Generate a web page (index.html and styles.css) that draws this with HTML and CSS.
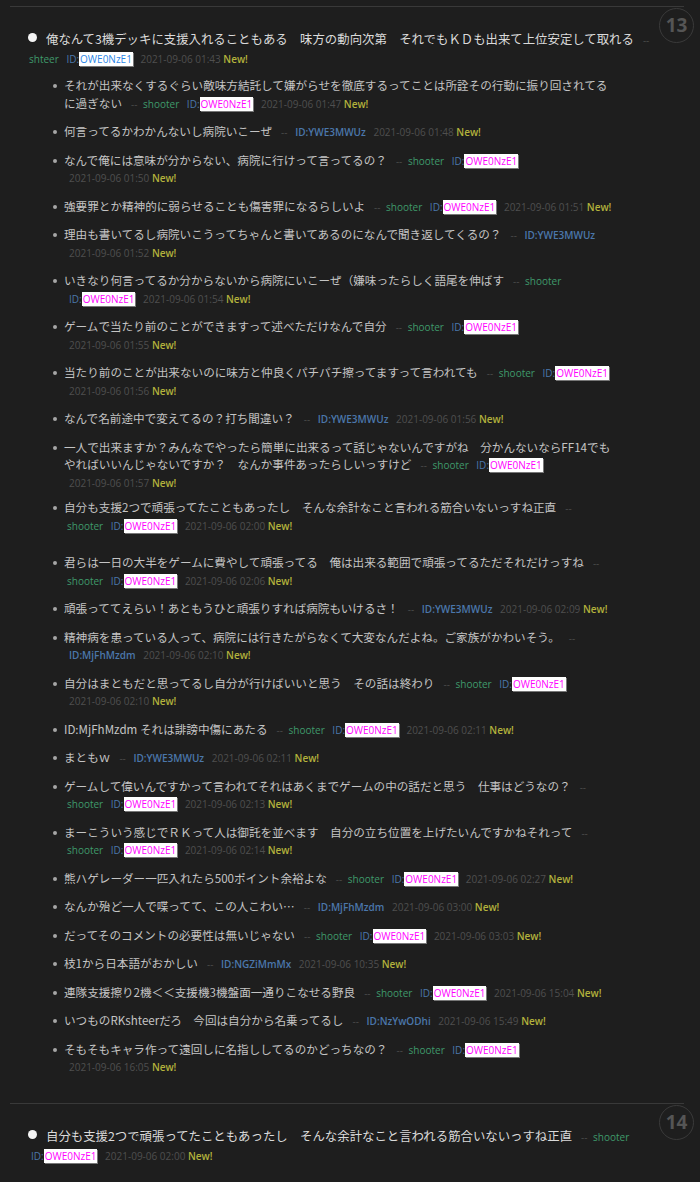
FILE: index.html
```html
<!DOCTYPE html>
<html lang="ja">
<head>
  <meta charset="UTF-8" />
  <meta name="viewport" content="width=device-width, initial-scale=1.0"/>
  <title>Thread</title>
  <link rel="stylesheet" href="styles.css">
</head>
<body>
  <div class="thread">
    <div class="num">13</div>
    <div class="head">
      <span class="dot"></span>俺なんて3機デッキに支援入れることもある　味方の動向次第　それでもＫＤも出来て上位安定して取れる<span class="meta">-- <span class="name">shteer</span> <span class="id">ID:<b class="box op">OWE0NzE1</b></span> <span class="date">2021-09-06 01:43 <i class="new">New!</i></span></span>
    </div>
    <ul class="replies">
      <li>それが出来なくするぐらい敵味方結託して嫌がらせを徹底するってことは所詮その行動に振り回されてるに過ぎない<span class="meta">-- <span class="name">shooter</span> <span class="id">ID:<b class="box">OWE0NzE1</b></span> <span class="date">2021-09-06 01:47 <i class="new">New!</i></span></span></li>
      <li>何言ってるかわかんないし病院いこーぜ<span class="meta">-- <span class="id uid">ID:YWE3MWUz</span> <span class="date">2021-09-06 01:48 <i class="new">New!</i></span></span></li>
      <li>なんで俺には意味が分からない、病院に行けって言ってるの？<span class="meta">-- <span class="name">shooter</span> <span class="id">ID:<b class="box">OWE0NzE1</b></span> <span class="date">2021-09-06 01:50 <i class="new">New!</i></span></span></li>
      <li>強要罪とか精神的に弱らせることも傷害罪になるらしいよ<span class="meta">-- <span class="name">shooter</span> <span class="id">ID:<b class="box">OWE0NzE1</b></span> <span class="date">2021-09-06 01:51 <i class="new">New!</i></span></span></li>
      <li>理由も書いてるし病院いこうってちゃんと書いてあるのになんで聞き返してくるの？<span class="meta">-- <span class="id uid">ID:YWE3MWUz</span> <span class="date">2021-09-06 01:52 <i class="new">New!</i></span></span></li>
      <li>いきなり何言ってるか分からないから病院にいこーぜ（嫌味ったらしく語尾を伸ばす<span class="meta">-- <span class="name">shooter</span> <span class="id">ID:<b class="box">OWE0NzE1</b></span> <span class="date">2021-09-06 01:54 <i class="new">New!</i></span></span></li>
      <li>ゲームで当たり前のことができますって述べただけなんで自分<span class="meta">-- <span class="name">shooter</span> <span class="id">ID:<b class="box">OWE0NzE1</b></span> <span class="date">2021-09-06 01:55 <i class="new">New!</i></span></span></li>
      <li>当たり前のことが出来ないのに味方と仲良くパチパチ擦ってますって言われても<span class="meta">-- <span class="name">shooter</span> <span class="id">ID:<b class="box">OWE0NzE1</b></span> <span class="date">2021-09-06 01:56 <i class="new">New!</i></span></span></li>
      <li>なんで名前途中で変えてるの？打ち間違い？<span class="meta">-- <span class="id uid">ID:YWE3MWUz</span> <span class="date">2021-09-06 01:56 <i class="new">New!</i></span></span></li>
      <li class="tight">一人で出来ますか？みんなでやったら簡単に出来るって話じゃないんですがね　分かんないならFF14でもやればいいんじゃないですか？　なんか事件あったらしいっすけど<span class="meta">-- <span class="name">shooter</span> <span class="id">ID:<b class="box">OWE0NzE1</b></span> <span class="date">2021-09-06 01:57 <i class="new">New!</i></span></span></li>
      <li class="gap">自分も支援2つで頑張ってたこともあったし　そんな余計なこと言われる筋合いないっすね正直<span class="meta">-- <span class="name">shooter</span> <span class="id">ID:<b class="box">OWE0NzE1</b></span> <span class="date">2021-09-06 02:00 <i class="new">New!</i></span></span></li>
      <li>君らは一日の大半をゲームに費やして頑張ってる　俺は出来る範囲で頑張ってるただそれだけっすね<span class="meta">-- <span class="name">shooter</span> <span class="id">ID:<b class="box">OWE0NzE1</b></span> <span class="date">2021-09-06 02:06 <i class="new">New!</i></span></span></li>
      <li>頑張っててえらい！あともうひと頑張りすれば病院もいけるさ！<span class="meta">-- <span class="id uid">ID:YWE3MWUz</span> <span class="date">2021-09-06 02:09 <i class="new">New!</i></span></span></li>
      <li>精神病を患っている人って、病院には行きたがらなくて大変なんだよね。ご家族がかわいそう。<span class="meta">-- <span class="id uid">ID:MjFhMzdm</span> <span class="date">2021-09-06 02:10 <i class="new">New!</i></span></span></li>
      <li>自分はまともだと思ってるし自分が行けばいいと思う　その話は終わり<span class="meta">-- <span class="name">shooter</span> <span class="id">ID:<b class="box">OWE0NzE1</b></span> <span class="date">2021-09-06 02:10 <i class="new">New!</i></span></span></li>
      <li>ID:MjFhMzdm それは誹謗中傷にあたる<span class="meta">-- <span class="name">shooter</span> <span class="id">ID:<b class="box">OWE0NzE1</b></span> <span class="date">2021-09-06 02:11 <i class="new">New!</i></span></span></li>
      <li>まともｗ<span class="meta">-- <span class="id uid">ID:YWE3MWUz</span> <span class="date">2021-09-06 02:11 <i class="new">New!</i></span></span></li>
      <li>ゲームして偉いんですかって言われてそれはあくまでゲームの中の話だと思う　仕事はどうなの？<span class="meta">-- <span class="name">shooter</span> <span class="id">ID:<b class="box">OWE0NzE1</b></span> <span class="date">2021-09-06 02:13 <i class="new">New!</i></span></span></li>
      <li>まーこういう感じでＲＫって人は御託を並べます　自分の立ち位置を上げたいんですかねそれって<span class="meta">-- <span class="name">shooter</span> <span class="id">ID:<b class="box">OWE0NzE1</b></span> <span class="date">2021-09-06 02:14 <i class="new">New!</i></span></span></li>
      <li>熊ハゲレーダー一匹入れたら500ポイント余裕よな<span class="meta">-- <span class="name">shooter</span> <span class="id">ID:<b class="box">OWE0NzE1</b></span> <span class="date">2021-09-06 02:27 <i class="new">New!</i></span></span></li>
      <li>なんか殆ど一人で喋ってて、この人こわい…<span class="meta">-- <span class="id uid">ID:MjFhMzdm</span> <span class="date">2021-09-06 03:00 <i class="new">New!</i></span></span></li>
      <li>だってそのコメントの必要性は無いじゃない<span class="meta">-- <span class="name">shooter</span> <span class="id">ID:<b class="box">OWE0NzE1</b></span> <span class="date">2021-09-06 03:03 <i class="new">New!</i></span></span></li>
      <li>枝1から日本語がおかしい<span class="meta">-- <span class="id uid">ID:NGZiMmMx</span> <span class="date">2021-09-06 10:35 <i class="new">New!</i></span></span></li>
      <li>連隊支援擦り2機＜＜支援機3機盤面一通りこなせる野良<span class="meta">-- <span class="name">shooter</span> <span class="id">ID:<b class="box">OWE0NzE1</b></span> <span class="date">2021-09-06 15:04 <i class="new">New!</i></span></span></li>
      <li>いつものRKshteerだろ　今回は自分から名乗ってるし<span class="meta">-- <span class="id uid">ID:NzYwODhi</span> <span class="date">2021-09-06 15:49 <i class="new">New!</i></span></span></li>
      <li>そもそもキャラ作って遠回しに名指ししてるのかどっちなの？<span class="meta">-- <span class="name">shooter</span> <span class="id">ID:<b class="box">OWE0NzE1</b></span> <span class="date">2021-09-06 16:05 <i class="new">New!</i></span></span></li>
    </ul>
  </div>
  <div class="thread">
    <div class="num">14</div>
    <div class="head">
      <span class="dot"></span>自分も支援2つで頑張ってたこともあったし　そんな余計なこと言われる筋合いないっすね正直<span class="meta">-- <span class="name">shooter</span> <span class="id">ID:<b class="box">OWE0NzE1</b></span> <span class="date">2021-09-06 02:00 <i class="new">New!</i></span></span>
    </div>
  </div>
</body>
</html>
```

FILE: styles.css
```css
* {
  box-sizing: border-box;
}
body {
  margin: 0;
  padding-top: 6px;
  background: #1e1e1e;
  color: #c4c4c4;
  font-family: "Noto Sans CJK JP", sans-serif;
  overflow: hidden;
}
.thread {
  position: relative;
  margin: 0 16px 0 10px;
  padding: 23px 10px 16px 0;
  border-top: 1px solid #393939;
}
.num {
  position: absolute;
  top: 1px;
  right: -10px;
  width: 35px;
  height: 35px;
  border: 1px solid #3a3a3a;
  border-radius: 50%;
  color: #555;
  font: bold 19px/33px "Open Sans", sans-serif;
  text-align: center;
}
.head {
  padding-left: 16px;
  font-size: 12.4px;
  line-height: 19px;
  color: #dadada;
}
.dot {
  display: inline-block;
  width: 9px;
  height: 9px;
  border-radius: 50%;
  background: #f4f4f4;
  margin: 0 9px 0 2px;
  vertical-align: 2px;
}
.replies {
  list-style: none;
  margin: 9px 0 0;
  padding: 0 62px 0 54px;
}
.replies li {
  position: relative;
  font-size: 11.6px;
  line-height: 17.5px;
  margin-bottom: 11px;
}
.replies li.tight {
  margin-bottom: 8px;
}
.replies li.gap {
  margin-bottom: 20px;
}
.replies li::before {
  content: "";
  position: absolute;
  left: -11px;
  top: 7px;
  width: 4px;
  height: 4px;
  border-radius: 50%;
  background: #a6a6a6;
}
.meta {
  font-family: "Open Sans", sans-serif;
  font-size: 10px;
  line-height: 12px;
  color: #4a4a4a;
  margin-left: 9px;
}
.name {
  color: #3f9a6b;
  margin-left: 3px;
}
.id {
  color: #4b77ab;
  margin-left: 5px;
  white-space: nowrap;
}
.uid {
  font-weight: 600;
}
.box {
  font-weight: normal;
  color: #f0f;
  background: #fff;
  padding: 0 1px;
  box-shadow: 1px 1px 0 #777;
}
.box.op {
  color: #2b86e6;
}
.date {
  color: #4f4f4f;
  margin-left: 5px;
  white-space: nowrap;
}
.new {
  font-style: normal;
  font-weight: 600;
  color: #b3b23c;
}
```
